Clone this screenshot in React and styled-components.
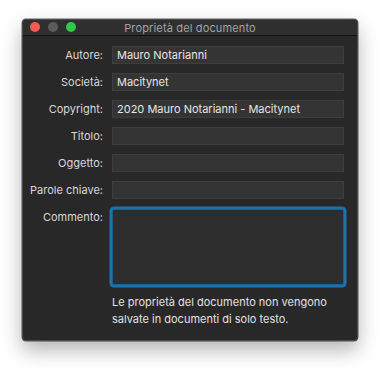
import React from 'react';
import styled, { createGlobalStyle } from 'styled-components';

const GlobalStyle = createGlobalStyle`
  html, body {
    margin: 0;
    padding: 0;
    background: #ffffff;
  }
  body {
    font-family: Inter, "Noto Sans", "Liberation Sans", sans-serif;
  }
`;

const Page = styled.div`
  width: 381px;
  height: 368px;
  padding: 19px 0 0 22px;
  box-sizing: border-box;
`;

const Window = styled.div`
  width: 336px;
  height: 322px;
  background: #282828;
  border: 1px solid #4a4a4a;
  border-radius: 4px;
  box-sizing: border-box;
  box-shadow: 0 9px 20px rgba(0, 0, 0, 0.3), 0 0 0 0.5px rgba(0, 0, 0, 0.6);
  overflow: hidden;
  display: flex;
  flex-direction: column;
`;

const TitleBar = styled.div`
  position: relative;
  height: 15px;
  background: #2f2f2f;
  border-bottom: 1px solid #111;
  display: flex;
  align-items: center;
  justify-content: center;
`;

const Lights = styled.div`
  position: absolute;
  left: 7px;
  top: 2px;
  display: flex;
  gap: 8px;
`;

const Light = styled.span`
  width: 10px;
  height: 10px;
  border-radius: 50%;
  background: ${p => p.$color};
`;

const Title = styled.div`
  font-size: 11px;
  color: #a3a3a3;
  letter-spacing: 0.15px;
`;

const Form = styled.div`
  display: grid;
  grid-template-columns: 80px 232px;
  column-gap: 9px;
  row-gap: 9px;
  padding: 10px 0 0 0;
  align-items: center;
`;

const Label = styled.div`
  font-size: 11px;
  color: #d8d8d8;
  text-align: right;
  align-self: ${p => (p.$top ? 'start' : 'center')};
  padding-top: ${p => (p.$top ? '2px' : '0')};
`;

const Field = styled.div`
  height: 18px;
  background: #343434;
  border: 1px solid #3e3e3e;
  box-sizing: border-box;
  font-size: 11px;
  color: #e6e6e6;
  display: flex;
  align-items: center;
  padding-left: 4px;
  white-space: nowrap;
`;

const TextArea = styled.div`
  height: 76px;
  margin-top: 1px;
  background: #2d2d2d;
  border: 1px solid #1c5f8a;
  box-sizing: border-box;
  border-radius: 2px;
  box-shadow: 0 0 0 2.5px #1f72a8;
`;

const Note = styled.div`
  grid-column: 2;
  font-size: 11px;
  line-height: 16.5px;
  color: #e2e2e2;
  margin-top: 0;
`;

const rows = [
  ['Autore:', 'Mauro Notarianni'],
  ['Società:', 'Macitynet'],
  ['Copyright:', '2020 Mauro Notarianni - Macitynet'],
  ['Titolo:', ''],
  ['Oggetto:', ''],
  ['Parole chiave:', ''],
];

export default function App() {
  return (
    <>
      <GlobalStyle />
      <Page>
        <Window>
          <TitleBar>
            <Lights>
              <Light $color="#fc5753" />
              <Light $color="#5c5c5c" />
              <Light $color="#33c748" />
            </Lights>
            <Title>Proprietà del documento</Title>
          </TitleBar>
          <Form>
            {rows.map(([label, value]) => (
              <React.Fragment key={label}>
                <Label>{label}</Label>
                <Field>{value}</Field>
              </React.Fragment>
            ))}
            <Label $top>Commento:</Label>
            <TextArea />
            <Note>
              Le proprietà del documento non vengono
              <br />
              salvate in documenti di solo testo.
            </Note>
          </Form>
        </Window>
      </Page>
    </>
  );
}
